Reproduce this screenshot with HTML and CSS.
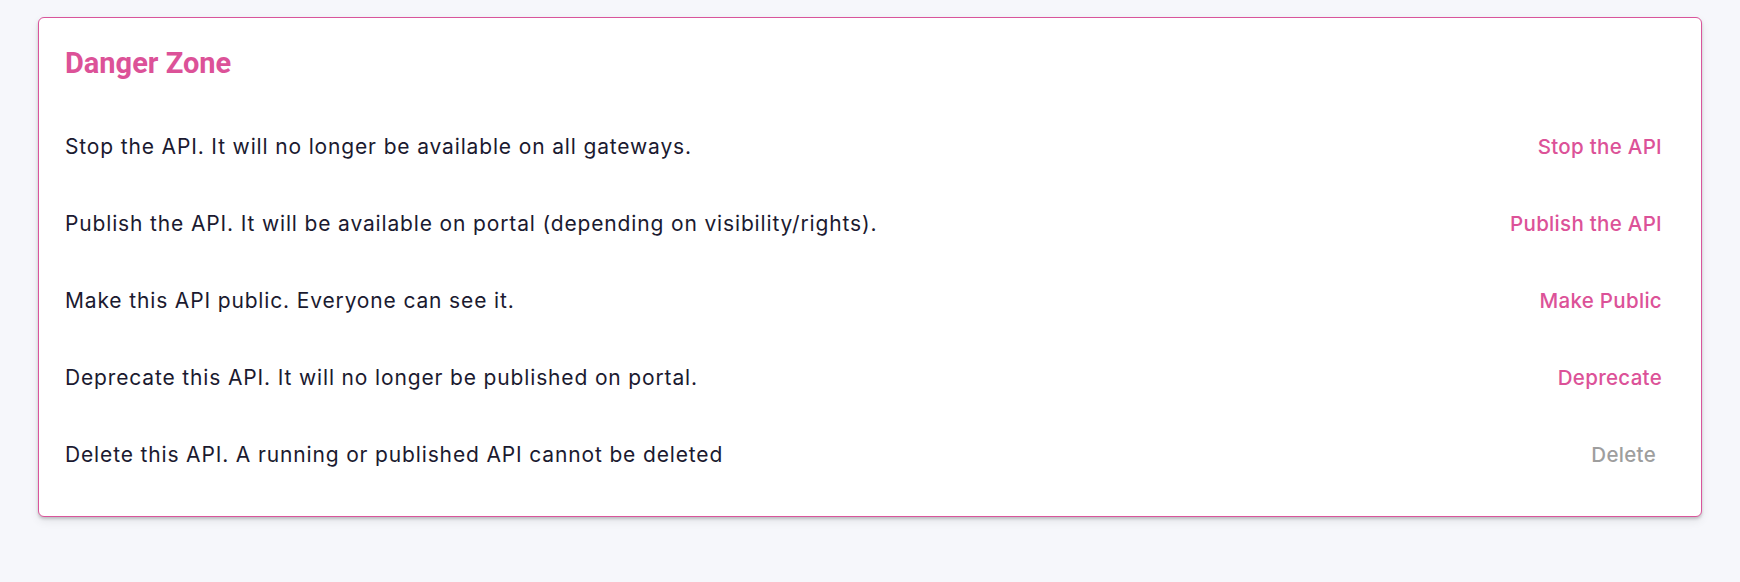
FILE: index.html
```html
<!DOCTYPE html>
<html lang="en">
<head>
<meta charset="utf-8">
<title>Danger Zone</title>
<link rel="stylesheet" href="styles.css">
</head>
<body>
  <div class="page">
    <section class="card">
      <h2 class="title">Danger Zone</h2>
      <div class="row">
        <span class="label">Stop the API. It will no longer be available on all gateways.</span>
        <button class="action">Stop the API</button>
      </div>
      <div class="row">
        <span class="label">Publish the API. It will be available on portal (depending on visibility/rights).</span>
        <button class="action">Publish the API</button>
      </div>
      <div class="row">
        <span class="label">Make this API public. Everyone can see it.</span>
        <button class="action">Make Public</button>
      </div>
      <div class="row">
        <span class="label">Deprecate this API. It will no longer be published on portal.</span>
        <button class="action">Deprecate</button>
      </div>
      <div class="row">
        <span class="label">Delete this API. A running or published API cannot be deleted</span>
        <button class="action disabled" disabled>Delete</button>
      </div>
    </section>
  </div>
</body>
</html>
```

FILE: styles.css
```css
html, body {
  margin: 0;
  padding: 0;
  background: #f6f7fb;
}

body {
  font-family: Inter, Roboto, "Liberation Sans", sans-serif;
  color: #1b1a30;
}

.page {
  padding: 17px 38px;
}

.card {
  background: #ffffff;
  border: 1px solid #d9559b;
  border-radius: 6px;
  box-shadow: 0 2px 3px rgba(0, 0, 0, 0.18), 0 4px 10px rgba(0, 0, 0, 0.08);
  padding: 0 27px 23px 26px;
}

.title {
  margin: 0;
  padding: 28px 0;
  font-family: Roboto, "Liberation Sans", sans-serif;
  font-size: 29px;
  line-height: 34px;
  font-weight: 700;
  color: #dc5298;
}

.row {
  height: 77px;
  display: flex;
  align-items: center;
  justify-content: space-between;
}

.label {
  font-size: 21px;
  letter-spacing: 0.85px;
  color: #1b1a30;
}

.action {
  font-family: Inter, Roboto, "Liberation Sans", sans-serif;
  font-size: 20.5px;
  font-weight: 500;
  letter-spacing: 0.3px;
  color: #dc5298;
  background: transparent;
  border: none;
  padding: 8px 12px;
  cursor: pointer;
}

.action.disabled {
  color: #9e9e9e;
  margin-right: 6px;
  cursor: default;
}
```
